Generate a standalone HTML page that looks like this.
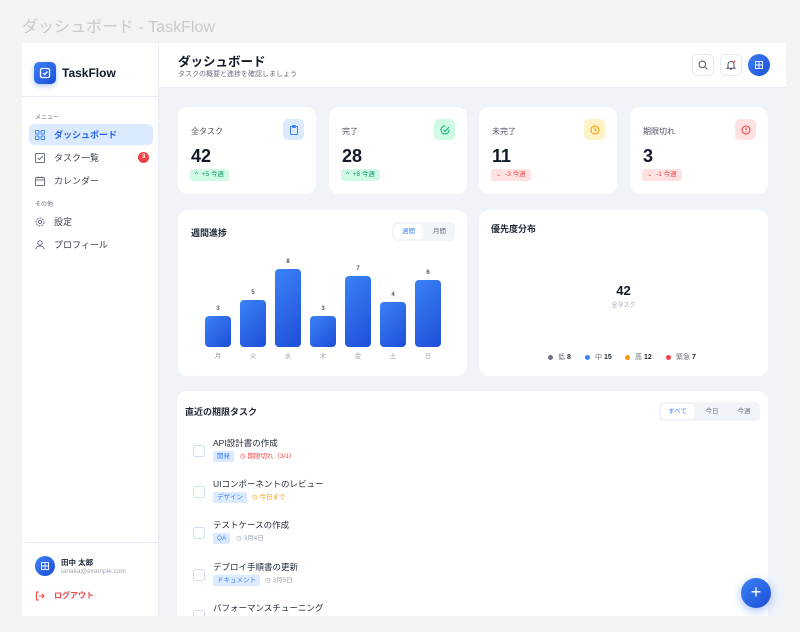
<!DOCTYPE html>
<html><head><meta charset="utf-8"><style>
*{box-sizing:border-box;margin:0;padding:0}
body{width:800px;height:632px;background:#f3f3f3;font-family:"Liberation Sans","Noto Sans CJK JP",sans-serif;position:relative;overflow:hidden;color:#1f2937}
.abs{position:absolute}
.title{left:22px;top:13px;font-size:16px;color:#cacaca}
.frame{left:22px;top:43px;width:764px;height:573px;background:#f0f3f8;overflow:hidden}
.side{left:0;top:0;width:137px;height:573px;background:#fff;border-right:1px solid #e8edf5}
.hdr{left:137px;top:0;width:627px;height:45px;background:#fff;border-bottom:1px solid #e8edf5}
.card{background:#fff;border-radius:10px}
.nav{position:absolute;left:7px;width:124px;height:21px;border-radius:5px;font-size:9px;color:#374151;display:flex;align-items:center;padding-left:6px}
.nav svg{margin-right:9px}
.lbl{font-size:6px;color:#6b7280;position:absolute;left:13px}
.stat .t{position:absolute;left:13px;top:19px;font-size:8px;color:#4b5563}
.stat .n{position:absolute;left:13px;top:39px;font-size:18px;font-weight:bold;color:#111827}
.stat .b{position:absolute;left:12px;top:62px;height:12px;border-radius:3px;font-size:6.5px;padding:0 5px;line-height:12px}
.stat .ic{position:absolute;right:12px;top:12px;width:21px;height:21px;border-radius:5px;display:flex;align-items:center;justify-content:center}
.bar{position:absolute;width:26px;border-radius:4px;background:linear-gradient(135deg,#3b82f6,#1d4ed8)}
.bv{position:absolute;width:26px;text-align:center;font-size:6px;color:#4b5563;font-weight:bold}
.bd{position:absolute;width:26px;text-align:center;font-size:6.5px;color:#9ca3af;top:140px}
.task{position:absolute;left:16px}
.task .cb{position:absolute;left:0;top:8px;width:12px;height:12px;border:1.5px solid #cfdcf5;border-radius:3px}
.task .nm{position:absolute;left:20px;top:0;font-size:8.5px;white-space:nowrap;color:#1f2937}
.task .tg{position:absolute;left:20px;top:14px;height:11px;line-height:11px;font-size:6.5px;background:#dbeafe;color:#3b82f6;border-radius:2px;padding:0 4px;white-space:nowrap}
.task .dt{position:absolute;top:14px;font-size:6.5px;line-height:11px;white-space:nowrap;display:flex;align-items:center;gap:3px}
.lg{display:inline-block;width:5px;height:5px;border-radius:50%;margin-right:5px;vertical-align:middle}
</style></head><body>
<div class="abs title">ダッシュボード - TaskFlow</div>
<div class="abs frame">
 <div class="abs side">
  <div class="abs" style="left:12px;top:19px;width:22px;height:22px;border-radius:5px;background:linear-gradient(135deg,#3b82f6,#1d4ed8);box-shadow:0 2px 6px rgba(37,99,235,.35);display:flex;align-items:center;justify-content:center">
   <svg width="12" height="12" viewBox="0 0 12 12" fill="none" stroke="#fff" stroke-width="1.3"><rect x="1.5" y="1.5" width="9" height="9" rx="1.5"/><path d="M4 6l1.6 1.6L8.5 4.5"/></svg></div>
  <div class="abs" style="left:40px;top:23px;font-size:12px;font-weight:bold;color:#111827">TaskFlow</div>
  <div class="abs" style="left:0;top:53px;width:137px;border-top:1px solid #e8edf5"></div>
  <div class="lbl" style="top:69px">メニュー</div>
  <div class="nav" style="top:81px;background:#dbeafe;color:#2563eb;font-weight:bold"><svg width="10" height="10" viewBox="0 0 10 10" fill="none" stroke="#3b82f6" stroke-width="1"><rect x=".5" y=".5" width="3.5" height="3.5" rx=".8"/><rect x="6" y=".5" width="3.5" height="3.5" rx=".8"/><rect x=".5" y="6" width="3.5" height="3.5" rx=".8"/><rect x="6" y="6" width="3.5" height="3.5" rx=".8"/></svg>ダッシュボード</div>
  <div class="nav" style="top:104px"><svg width="10" height="10" viewBox="0 0 10 10" fill="none" stroke="#6b7280" stroke-width="1"><rect x=".5" y=".5" width="9" height="9" rx="1"/><path d="M3 5l1.5 1.5L8 3"/></svg>タスク一覧<span style="position:absolute;right:4px;top:5px;width:11px;height:11px;border-radius:50%;background:#ef4444;color:#fff;font-size:6px;text-align:center;line-height:11px;font-weight:bold">3</span></div>
  <div class="nav" style="top:127px"><svg width="10" height="10" viewBox="0 0 10 10" fill="none" stroke="#6b7280" stroke-width="1"><rect x=".5" y="1.5" width="9" height="8" rx="1"/><path d="M.5 4h9M3 .5v2M7 .5v2"/></svg>カレンダー</div>
  <div class="lbl" style="top:156px">その他</div>
  <div class="nav" style="top:168px"><svg width="10" height="10" viewBox="0 0 10 10" fill="none" stroke="#6b7280" stroke-width="1"><circle cx="5" cy="5" r="1.6"/><circle cx="5" cy="5" r="4" stroke-dasharray="2 1"/></svg>設定</div>
  <div class="nav" style="top:191px"><svg width="10" height="10" viewBox="0 0 10 10" fill="none" stroke="#6b7280" stroke-width="1"><circle cx="5" cy="3" r="2.2"/><path d="M1 9.5c0-2.3 1.8-3.5 4-3.5s4 1.2 4 3.5"/></svg>プロフィール</div>
  <div class="abs" style="left:0;top:499px;width:137px;border-top:1px solid #e8edf5"></div>
  <div class="abs" style="left:13px;top:513px;width:20px;height:20px;border-radius:50%;background:linear-gradient(135deg,#3b82f6,#1d4ed8);display:flex;align-items:center;justify-content:center"><svg width="8" height="8" viewBox="0 0 8 8" fill="none" stroke="#fff" stroke-width=".9"><rect x=".5" y=".5" width="7" height="7"/><path d="M4 .5v7M.5 4h7"/></svg></div>
  <div class="abs" style="left:39px;top:514px;font-size:7.5px;font-weight:bold">田中 太郎</div>
  <div class="abs" style="left:39px;top:525px;font-size:6.5px;color:#9ca3af">tanaka@example.com</div>
  <div class="abs" style="left:13px;top:547px;font-size:8px;color:#ef4444;font-weight:bold;display:flex;align-items:center;gap:9px"><svg width="10" height="10" viewBox="0 0 10 10" fill="none" stroke="#ef4444" stroke-width="1"><path d="M4 1H1.5v8H4M4 5h5M7 3l2 2-2 2"/></svg>ログアウト</div>
 </div>
 <div class="abs hdr">
  <div class="abs" style="left:19px;top:8px;font-size:12.5px;font-weight:bold;color:#111827">ダッシュボード</div>
  <div class="abs" style="left:19px;top:26px;font-size:7px;color:#6b7280">タスクの概要と進捗を確認しましょう</div>
  <div class="abs" style="left:533px;top:11px;width:22px;height:22px;border:1px solid #e5e9f2;border-radius:5px;display:flex;align-items:center;justify-content:center"><svg width="10" height="10" viewBox="0 0 10 10" fill="none" stroke="#4b5563" stroke-width="1"><circle cx="4.3" cy="4.3" r="3.3"/><path d="M6.8 6.8l2.5 2.5"/></svg></div>
  <div class="abs" style="left:561px;top:11px;width:22px;height:22px;border:1px solid #e5e9f2;border-radius:5px;display:flex;align-items:center;justify-content:center"><svg width="10" height="10" viewBox="0 0 10 10" fill="none" stroke="#4b5563" stroke-width="1"><path d="M2 7.5V4.5a3 3 0 016 0v3l1 .8H1zM4 9.3h2"/><circle cx="8.5" cy="1.5" r="1" fill="#ef4444" stroke="none"/></svg></div>
  <div class="abs" style="left:589px;top:11px;width:22px;height:22px;border-radius:50%;background:linear-gradient(135deg,#3b82f6,#1d4ed8);display:flex;align-items:center;justify-content:center"><svg width="8" height="8" viewBox="0 0 8 8" fill="none" stroke="#fff" stroke-width=".9"><rect x=".5" y=".5" width="7" height="7"/><path d="M4 .5v7M.5 4h7"/></svg></div>
 </div>

 <div class="abs card stat" style="left:156px;top:64px;width:138px;height:87px"><div class="t">全タスク</div><div class="n">42</div><div class="b" style="background:#d1fae5;color:#059669">^ &nbsp;+5 今週</div><div class="ic" style="background:#dbeafe"><svg width="10" height="10" viewBox="0 0 10 10" fill="none" stroke="#3b82f6" stroke-width="1"><rect x="1.5" y="1.5" width="7" height="8" rx="1"/><rect x="3.5" y=".5" width="3" height="2" rx=".5"/></svg></div></div>
 <div class="abs card stat" style="left:307px;top:64px;width:138px;height:87px"><div class="t">完了</div><div class="n">28</div><div class="b" style="background:#d1fae5;color:#059669">^ &nbsp;+8 今週</div><div class="ic" style="background:#d1fae5"><svg width="10" height="10" viewBox="0 0 10 10" fill="none" stroke="#10b981" stroke-width="1.1"><path d="M9 4.5A4 4 0 115.5 1"/><path d="M3.5 5l1.5 1.5L9 2"/></svg></div></div>
 <div class="abs card stat" style="left:457px;top:64px;width:138px;height:87px"><div class="t">未完了</div><div class="n">11</div><div class="b" style="background:#fee2e2;color:#ef4444">⌄ &nbsp;-3 今週</div><div class="ic" style="background:#fef3c7"><svg width="10" height="10" viewBox="0 0 10 10" fill="none" stroke="#f59e0b" stroke-width="1.1"><circle cx="5" cy="5" r="4"/><path d="M5 2.5V5l1.6 1"/></svg></div></div>
 <div class="abs card stat" style="left:608px;top:64px;width:138px;height:87px"><div class="t">期限切れ</div><div class="n">3</div><div class="b" style="background:#fee2e2;color:#ef4444">⌄ &nbsp;-1 今週</div><div class="ic" style="background:#fee2e2"><svg width="10" height="10" viewBox="0 0 10 10" fill="none" stroke="#ef4444" stroke-width="1.1"><circle cx="5" cy="5" r="4"/><path d="M5 2.8v2.6M5 6.6v.6"/></svg></div></div>

 <div class="abs card" style="left:156px;top:167px;width:289px;height:166px">
  <div class="abs" style="left:13px;top:16px;font-size:9px;font-weight:bold">週間進捗</div>
  <div class="abs" style="left:214px;top:12px;width:63px;height:19px;background:#f1f4f9;border-radius:5px"></div>
  <div class="abs" style="left:216px;top:14px;width:29px;height:15px;background:#fff;border-radius:4px;font-size:6.5px;color:#3b82f6;text-align:center;line-height:15px">週間</div>
  <div class="abs" style="left:247px;top:14px;width:29px;height:15px;font-size:6.5px;color:#6b7280;text-align:center;line-height:15px">月間</div>
  <div class="bar" style="left:27px;top:106px;height:31px"></div><div class="bv" style="left:27px;top:96px">3</div><div class="bd" style="left:27px">月</div>
  <div class="bar" style="left:62px;top:90px;height:47px"></div><div class="bv" style="left:62px;top:80px">5</div><div class="bd" style="left:62px">火</div>
  <div class="bar" style="left:97px;top:59px;height:78px"></div><div class="bv" style="left:97px;top:49px">8</div><div class="bd" style="left:97px">水</div>
  <div class="bar" style="left:132px;top:106px;height:31px"></div><div class="bv" style="left:132px;top:96px">3</div><div class="bd" style="left:132px">木</div>
  <div class="bar" style="left:167px;top:66px;height:71px"></div><div class="bv" style="left:167px;top:56px">7</div><div class="bd" style="left:167px">金</div>
  <div class="bar" style="left:202px;top:92px;height:45px"></div><div class="bv" style="left:202px;top:82px">4</div><div class="bd" style="left:202px">土</div>
  <div class="bar" style="left:237px;top:70px;height:67px"></div><div class="bv" style="left:237px;top:60px">6</div><div class="bd" style="left:237px">日</div>
 </div>
 <div class="abs card" style="left:457px;top:167px;width:289px;height:166px">
  <div class="abs" style="left:12px;top:12px;font-size:9px;font-weight:bold">優先度分布</div>
  <div class="abs" style="left:0;width:289px;top:73px;text-align:center;font-size:13px;font-weight:bold;color:#111827">42</div>
  <div class="abs" style="left:0;width:289px;top:90px;text-align:center;font-size:6px;color:#9ca3af">全タスク</div>
  <div class="abs" style="left:69px;top:142px;font-size:7px;color:#6b7280;white-space:nowrap">
   <span style="position:absolute;left:0"><span class="lg" style="background:#6b7280"></span>低 <b style="color:#1f2937">8</b></span>
   <span style="position:absolute;left:37px"><span class="lg" style="background:#3b82f6"></span>中 <b style="color:#1f2937">15</b></span>
   <span style="position:absolute;left:77px"><span class="lg" style="background:#f59e0b"></span>高 <b style="color:#1f2937">12</b></span>
   <span style="position:absolute;left:118px"><span class="lg" style="background:#ef4444"></span>緊急 <b style="color:#1f2937">7</b></span>
  </div>
 </div>

 <div class="abs card" style="left:155px;top:348px;width:591px;height:240px">
  <div class="abs" style="left:8px;top:14px;font-size:9px;font-weight:bold">直近の期限タスク</div>
  <div class="abs" style="left:482px;top:11px;width:101px;height:19px;background:#f1f4f9;border-radius:5px"></div>
  <div class="abs" style="left:484px;top:13px;width:33px;height:15px;background:#fff;border-radius:4px;font-size:6.5px;color:#3b82f6;text-align:center;line-height:15px">すべて</div>
  <div class="abs" style="left:520px;top:13px;width:30px;height:15px;font-size:6.5px;color:#6b7280;text-align:center;line-height:15px">今日</div>
  <div class="abs" style="left:552px;top:13px;width:30px;height:15px;font-size:6.5px;color:#6b7280;text-align:center;line-height:15px">今週</div>
  <div class="task" style="top:46px"><div class="cb"></div><div class="nm">API設計書の作成</div><div class="tg">開発</div><div class="dt" style="left:47px;color:#ef4444">◷ 期限切れ（3/1）</div></div>
  <div class="task" style="top:87px"><div class="cb"></div><div class="nm">UIコンポーネントのレビュー</div><div class="tg">デザイン</div><div class="dt" style="left:59px;color:#f59e0b">◷ 今日まで</div></div>
  <div class="task" style="top:128px"><div class="cb"></div><div class="nm">テストケースの作成</div><div class="tg">QA</div><div class="dt" style="left:43px;color:#9ca3af">◷ 3月4日</div></div>
  <div class="task" style="top:170px"><div class="cb"></div><div class="nm">デプロイ手順書の更新</div><div class="tg">ドキュメント</div><div class="dt" style="left:72px;color:#9ca3af">◷ 3月5日</div></div>
  <div class="task" style="top:211px"><div class="cb"></div><div class="nm">パフォーマンスチューニング</div></div>
 </div>
 <div class="abs" style="left:719px;top:535px;width:30px;height:30px;border-radius:50%;background:linear-gradient(135deg,#3b82f6,#1d4ed8);box-shadow:0 3px 10px rgba(37,99,235,.4);color:#fff;font-size:18px;text-align:center;line-height:29px">+</div>
</div>
</body></html>
